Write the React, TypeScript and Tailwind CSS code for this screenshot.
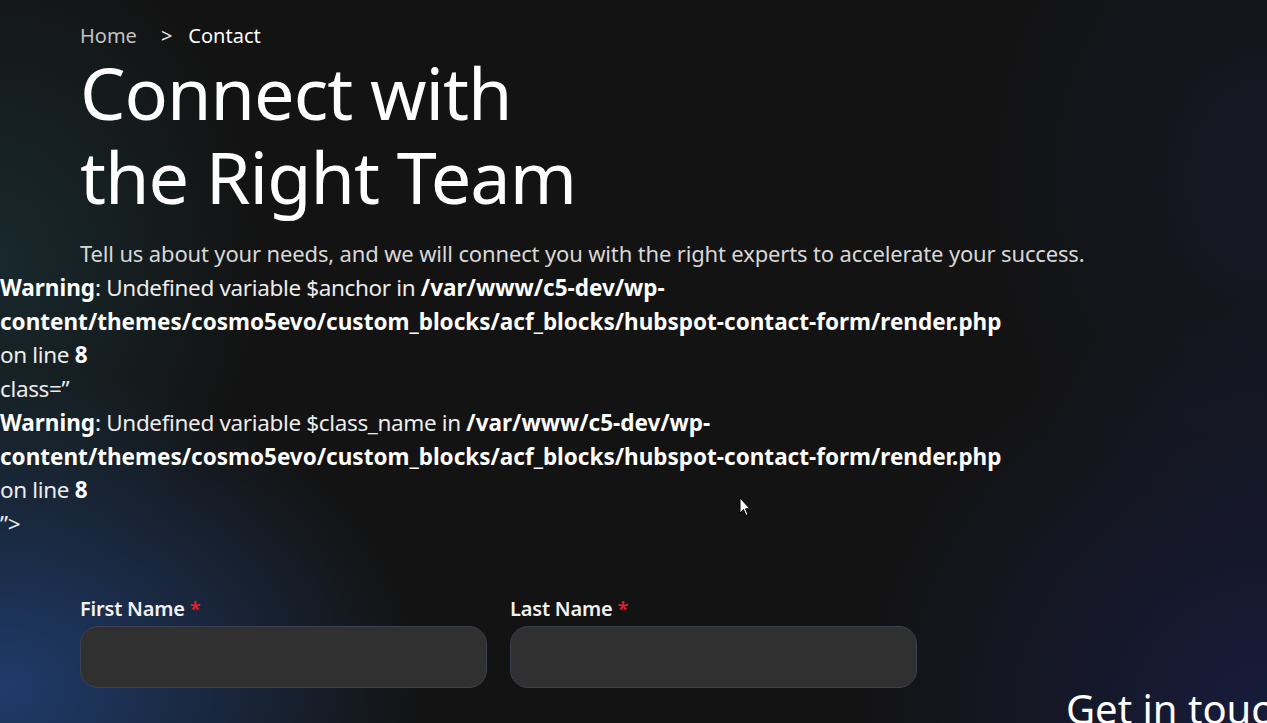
import React from 'react'

const path = '/var/www/c5-dev/wp-'
const path2 = 'content/themes/cosmo5evo/custom_blocks/acf_blocks/hubspot-contact-form/render.php'

function PhpWarning({ variable }: { variable: string }) {
  return (
    <>
      <div>
        <b className="font-bold tracking-normal text-white">Warning</b>: Undefined variable {variable} in{' '}
        <b className="font-bold tracking-normal text-white">{path}</b>
      </div>
      <div><b className="font-bold tracking-normal text-white">{path2}</b></div>
      <div>on line <b className="font-bold tracking-normal text-white">8</b></div>
    </>
  )
}

function Field({ label }: { label: string }) {
  return (
    <div className="flex w-[407px] flex-col">
      <label className="text-[20px] font-semibold leading-[28px] tracking-[-0.2px] text-[#f2f2f2]">
        {label} <span className="text-[#e0202a]">*</span>
      </label>
      <input className="mt-[3px] h-[62px] w-full rounded-[18px] border border-[#3c4254] bg-[#303030] px-4 text-white outline-none" />
    </div>
  )
}

export default function App() {
  return (
    <div
      className="relative h-[723px] w-full overflow-hidden bg-[#131313] bg-[radial-gradient(ellipse_260px_330px_at_0%_36%,rgba(28,58,66,0.55),transparent),radial-gradient(ellipse_420px_320px_at_0%_95%,rgba(32,62,112,0.95),transparent),radial-gradient(ellipse_420px_420px_at_100%_100%,rgba(24,30,70,0.8),transparent),radial-gradient(ellipse_300px_380px_at_100%_25%,rgba(24,30,60,0.45),transparent)] font-['Noto_Sans',sans-serif] text-[#e8e8e8]"
    >
      <div className="px-[80px] pt-[22px]">
        <nav className="flex items-center text-[20px] leading-[28px]">
          <span className="text-[#c4c4c4]">Home</span>
          <span className="ml-[24px] text-[#e8e8e8]">&gt;</span>
          <span className="ml-[16px] text-white">Contact</span>
        </nav>
        <h1 className="text-[72px] font-normal leading-[84px] tracking-[-1px] text-white">
          Connect with
          <br />
          the Right Team
        </h1>
        <p className="mt-[18px] text-[22px] font-normal leading-[34px] tracking-[-0.15px] text-[#d8d8d8]">
          Tell us about your needs, and we will connect you with the right experts to accelerate your success.
        </p>
      </div>

      <div className="mt-[1px] text-[22.5px] font-normal leading-[33.7px] tracking-[-0.35px] text-[#ececec]">
        <PhpWarning variable="$anchor" />
        <div>class=”</div>
        <PhpWarning variable="$class_name" />
        <div>”&gt;</div>
      </div>

      <div className="mt-[54px] flex px-[80px]">
        <div className="flex gap-[23px]">
          <Field label="First Name" />
          <Field label="Last Name" />
        </div>
        <h2 className="ml-[149px] mt-[90px] whitespace-nowrap text-[40px] font-normal leading-[48px] text-white">
          Get in touch
        </h2>
      </div>

      <svg className="absolute left-[739px] top-[497px]" width="12" height="20" viewBox="0 0 12 20">
        <path d="M1 1 L1 16 L4.5 12.5 L7 18.5 L9 17.6 L6.6 11.8 L11 11.8 Z" fill="#fff" stroke="#000" strokeWidth="1" />
      </svg>
    </div>
  )
}
